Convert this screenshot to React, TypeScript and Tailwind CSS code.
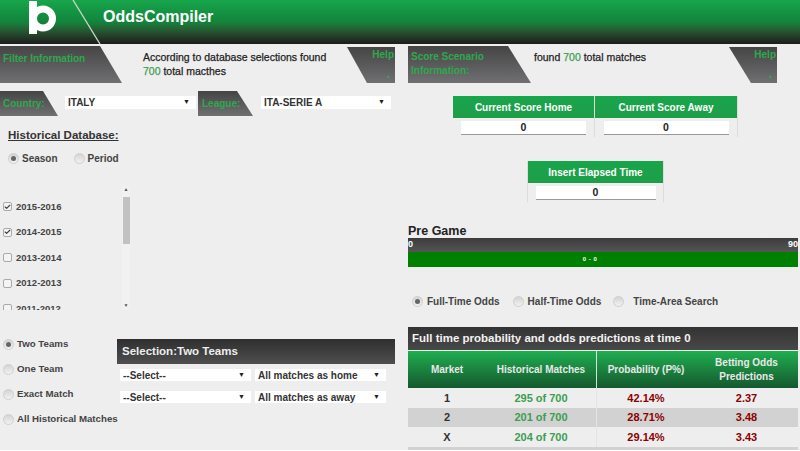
import { Check } from 'lucide-react'

const seasons = [
  { label: '2015-2016', checked: true },
  { label: '2014-2015', checked: true },
  { label: '2013-2014', checked: false },
  { label: '2012-2013', checked: false },
  { label: '2011-2012', checked: false },
]

const rows = [
  { market: '1', matches: '295 of 700', prob: '42.14%', odds: '2.37', bg: 'bg-[#eeeeee]' },
  { market: '2', matches: '201 of 700', prob: '28.71%', odds: '3.48', bg: 'bg-[#d2d2d2]' },
  { market: 'X', matches: '204 of 700', prob: '29.14%', odds: '3.43', bg: 'bg-[#eeeeee]' },
]

function Radio({ checked = false }: { checked?: boolean }) {
  return (
    <span className="flex h-[11px] w-[11px] shrink-0 items-center justify-center rounded-full border border-[#cfcfcf] bg-gradient-to-b from-[#d4d4d4] to-[#f2f2f2]">
      {checked && <span className="h-[5px] w-[5px] rounded-full bg-[#666]" />}
    </span>
  )
}

function FakeSelect({ value, className }: { value: string; className: string }) {
  return (
    <div className={`flex items-center justify-between bg-white pl-[3px] pr-[6px] text-[10px] font-bold text-[#333] ${className}`}>
      <span>{value}</span>
      <span className="text-[7px] text-[#222]">▼</span>
    </div>
  )
}

function Badge({ children, className, clip }: { children: React.ReactNode; className: string; clip: string }) {
  return (
    <div className={`shrink-0 bg-gradient-to-b from-[#454545] to-[#707073] text-[10px] font-bold text-[#2ea84f] ${clip} ${className}`}>
      {children}
    </div>
  )
}

function HelpTab({ clip }: { clip: string }) {
  return (
    <div className={`relative h-[36px] w-[48px] shrink-0 bg-gradient-to-b from-[#454545] to-[#707073] text-right text-[10px] font-bold text-[#2ea84f] ${clip}`}>
      <span className="absolute right-[1px] top-0">Help</span>
      <span className="absolute bottom-[3px] right-[4px] text-[5px]">▲</span>
    </div>
  )
}

function ScoreCell({ title, className, inputClass }: { title: string; className: string; inputClass: string }) {
  return (
    <div className={`flex h-[41px] flex-col items-center border-r border-[#dcdcdc] ${className}`}>
      <div className="flex h-[22px] w-full items-center justify-center bg-gradient-to-b from-[#17a64b] to-[#1f9d48] text-[10px] font-bold text-white">
        {title}
      </div>
      <div className={`mt-[3px] flex h-[14px] items-center justify-center border-b border-[#999] bg-white text-[10.5px] font-bold text-[#222] ${inputClass}`}>
        0
      </div>
    </div>
  )
}

export default function App() {
  return (
    <div className="flex h-[451px] w-[800px] flex-col overflow-hidden bg-white font-['Liberation_Sans',Arial,sans-serif] text-[#222]">
      {/* Header */}
      <div className="relative flex h-[44px] shrink-0 items-center bg-gradient-to-b from-[#17a64b] via-[#12843c] to-[#1c1c1c] pb-[10px]">
        <svg className="absolute left-0 top-0" width="110" height="44" viewBox="0 0 110 44">
          <path d="M29 1h8v33h-8z" fill="#fff" />
          <circle cx="43" cy="18.500" r="9.500" stroke="#fff" strokeWidth="7" fill="none" />
          <path d="M73 0l27 44" stroke="#c9d8cc" strokeWidth="1.300" fill="none" />
        </svg>
        <span className="ml-[103px] text-[16px] font-bold text-white">OddsCompiler</span>
      </div>

      <div className="flex h-[406px] shrink-0 bg-[#eeeeee]">
        {/* Left column */}
        <div className="w-[400px] shrink-0">
          <div className="mt-[2px] flex h-[37px]">
            <Badge className="h-[37px] w-[122px] pl-[3px] pt-[5px]" clip="[clip-path:polygon(0_0,100px_0,122px_100%,0_100%)]">
              Filter Information
            </Badge>
            <div className="ml-[21px] w-[204px] pt-[4px] text-[10.5px] leading-[14px] text-[#222] [-webkit-text-stroke:0.25px_#222]">
              According to database selections found
              <br />
              <span className="text-[#3c9e50] [-webkit-text-stroke:0.25px_#3c9e50]">700</span> total macthes
            </div>
            <div className="mt-[1px]">
              <HelpTab clip="[clip-path:polygon(0_0,100%_0,100%_100%,20px_100%)]" />
            </div>
          </div>

          <div className="mt-[8px] flex h-[25px] items-start">
            <Badge className="h-[25px] w-[58px] pl-[3px] pt-[5px]" clip="[clip-path:polygon(0_0,43px_0,58px_100%,0_100%)]">
              Country:
            </Badge>
            <FakeSelect value="ITALY" className="ml-[7px] mt-[5px] h-[13px] w-[131px]" />
            <Badge className="ml-[2px] h-[25px] w-[55px] pl-[4px] pt-[5px]" clip="[clip-path:polygon(0_0,39px_0,55px_100%,0_100%)]">
              League:
            </Badge>
            <FakeSelect value="ITA-SERIE A" className="ml-[8px] mt-[5px] h-[13px] w-[130px]" />
          </div>

          <div className="ml-[8px] mt-[12px] text-[11.5px] font-bold leading-[14px] text-[#333] underline">Historical Database:</div>

          <div className="ml-[8px] mt-[10px] flex h-[13px] items-center text-[10px] font-bold text-[#444]">
            <Radio checked />
            <span className="ml-[3px]">Season</span>
            <span className="ml-[16px]">
              <Radio />
            </span>
            <span className="ml-[3px]">Period</span>
          </div>

          <div className="mt-[21px] flex h-[124px] w-[130px] overflow-hidden">
            <div className="w-[122px] pl-[3px] pt-[8px]">
              {seasons.map((s) => (
                <div key={s.label} className="flex h-[25.500px] items-center text-[9.500px] font-bold text-[#444]">
                  <span className="flex h-[9px] w-[9px] items-center justify-center rounded-[2px] border border-[#aaa] bg-[#f4f4f4]">
                    {s.checked && <Check size={8} strokeWidth={4} className="text-[#444]" />}
                  </span>
                  <span className="ml-[4px]">{s.label}</span>
                </div>
              ))}
            </div>
            <div className="flex h-[124px] w-[8px] flex-col items-center bg-[#f1f1f1] text-[5px] leading-[6px] text-[#555]">
              <span className="h-[11px]">▲</span>
              <div className="h-[47px] w-[7px] bg-[#c1c1c1]" />
              <span className="mt-[58px]">▼</span>
            </div>
          </div>

          <div className="mt-[22px] flex">
            <div className="ml-[3px] w-[114px] text-[9.700px] font-bold text-[#444]">
              {['Two Teams', 'One Team', 'Exact Match', 'All Historical Matches'].map((t, i) => (
                <div key={t} className="flex h-[25px] items-center">
                  <Radio checked={i === 0} />
                  <span className="ml-[3px] whitespace-nowrap">{t}</span>
                </div>
              ))}
            </div>
            <div className="mt-[7px] w-[278px]">
              <div className="flex h-[25px] items-center bg-gradient-to-b from-[#2f2f2f] to-[#4f4f4f] pl-[5px] text-[11.5px] font-bold text-[#eee]">
                Selection:Two Teams
              </div>
              <div className="ml-[3px] mt-[5px] flex gap-[4px]">
                <FakeSelect value="--Select--" className="h-[12px] w-[131px]" />
                <FakeSelect value="All matches as home" className="h-[12px] w-[131px]" />
              </div>
              <div className="ml-[3px] mt-[10px] flex gap-[4px]">
                <FakeSelect value="--Select--" className="h-[12px] w-[131px]" />
                <FakeSelect value="All matches as away" className="h-[12px] w-[131px]" />
              </div>
            </div>
          </div>
        </div>

        {/* Right column */}
        <div className="w-[400px] shrink-0 pl-[8px]">
          <div className="mt-[2px] flex h-[37px]">
            <Badge className="h-[37px] w-[123px] pl-[3px] pt-[4px] leading-[14px]" clip="[clip-path:polygon(0_0,100px_0,123px_100%,0_100%)]">
              Score Scenario
              <br />
              Information:
            </Badge>
            <div className="ml-[3px] w-[195px] pt-[4px] text-[10.5px] leading-[14px] text-[#222] [-webkit-text-stroke:0.25px_#222]">
              found <span className="text-[#3c9e50] [-webkit-text-stroke:0.25px_#3c9e50]">700</span> total matches
            </div>
            <div className="mt-[1px]">
              <HelpTab clip="[clip-path:polygon(0_0,100%_0,100%_100%,22px_100%)]" />
            </div>
          </div>

          <div className="ml-[45px] mt-[13px] flex w-[285px]">
            <ScoreCell title="Current Score Home" className="w-[142px]" inputClass="w-[125px]" />
            <ScoreCell title="Current Score Away" className="w-[143px]" inputClass="w-[125px]" />
          </div>

          <div className="ml-[119px] mt-[24px] w-[137px]">
            <ScoreCell title="Insert Elapsed Time" className="w-[137px] border-l" inputClass="w-[120px]" />
          </div>

          <div className="mt-[22px] text-[12.5px] font-bold leading-[14px] text-[#222]">Pre Game</div>
          <div className="flex h-[14px] w-[390px] items-start justify-between bg-gradient-to-b from-[#3c3c3c] to-[#555] text-[9px] font-bold leading-[12px] text-white">
            <span>0</span>
            <span>90</span>
          </div>
          <div className="flex h-[15px] w-[390px] items-center justify-center bg-[#008000] pr-[26px] text-[6px] font-bold tracking-[0.5px] text-white">
            0 - 0
          </div>

          <div className="ml-[4px] mt-[27px] flex h-[14px] items-center text-[10px] font-bold text-[#444]">
            <Radio checked />
            <span className="ml-[4px]">Full-Time Odds</span>
            <span className="ml-[13px]">
              <Radio />
            </span>
            <span className="ml-[4px]">Half-Time Odds</span>
            <span className="ml-[12px]">
              <Radio />
            </span>
            <span className="ml-[9px]">Time-Area Search</span>
          </div>

          <div className="mt-[19px] w-[390px]">
            <div className="flex h-[23px] items-center bg-gradient-to-b from-[#333] to-[#484848] pl-[4px] text-[11.5px] font-bold text-[#f2f2f2]">
              Full time probability and odds predictions at time 0
            </div>
            <div className="mt-[1px] grid h-[37px] grid-cols-[78px_111px_98px_103px] items-center bg-gradient-to-b from-[#1faf50] to-[#14592e] text-center text-[10px] font-bold leading-[14px] text-[#e8e8e8]">
              <span>Market</span>
              <span className="flex h-full items-center justify-center border-r border-[#cfe5d5]">Historical Matches</span>
              <span>Probability (P%)</span>
              <span>
                Betting Odds
                <br />
                Predictions
              </span>
            </div>
            {rows.map((r) => (
              <div key={r.market} className={`grid h-[19.500px] grid-cols-[78px_111px_98px_103px] items-center text-center text-[11px] font-bold ${r.bg}`}>
                <span className="text-[#333]">{r.market}</span>
                <span className="flex h-full items-center justify-center border-r border-[#e4e4e4] text-[#3c9e50]">{r.matches}</span>
                <span className="text-[#8b0000]">{r.prob}</span>
                <span className="text-[#8b0000]">{r.odds}</span>
              </div>
            ))}
            <div className="h-[4px] bg-[#d2d2d2]" />
          </div>
        </div>
      </div>
      <div className="flex-1 bg-white" />
    </div>
  )
}
